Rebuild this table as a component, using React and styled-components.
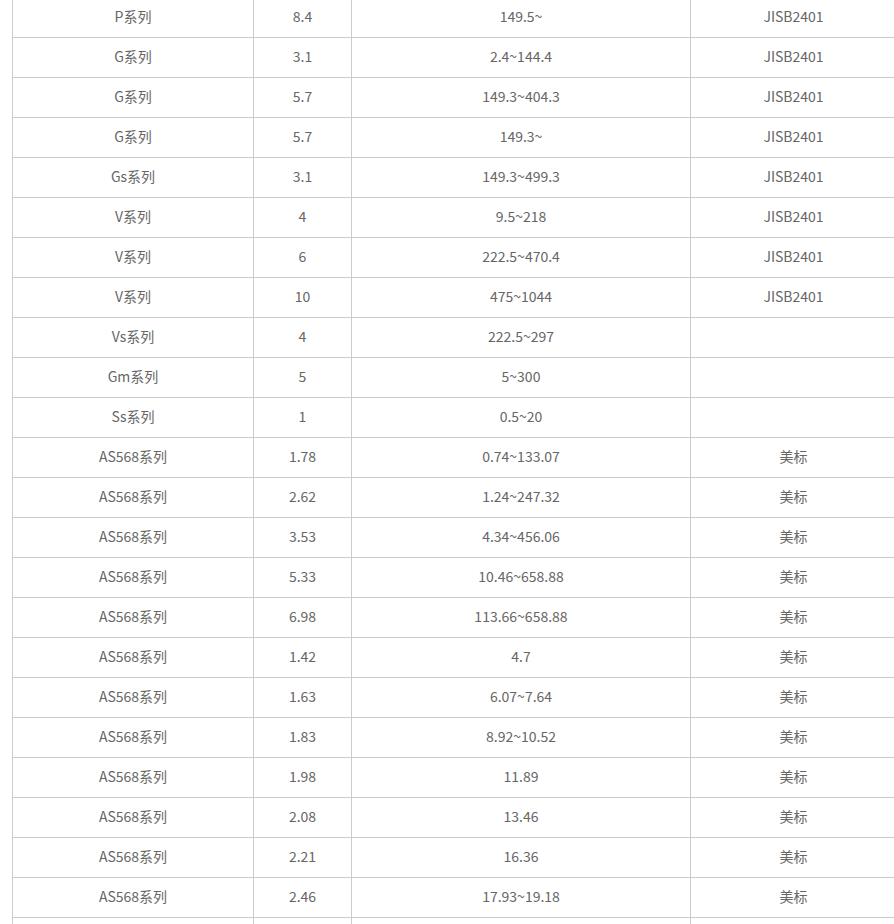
import React from 'react'
import styled, { createGlobalStyle } from 'styled-components'

const GlobalStyle = createGlobalStyle`
    html, body {
        margin: 0;
        padding: 0;
        background: #fff;
    }
`

const Wrap = styled.div`
    padding-left: 12px;
    margin-top: -3px;
    overflow: hidden;
    width: 894px;
`

const Table = styled.table`
    border-collapse: collapse;
    table-layout: fixed;
    width: 884px;
    font-family: 'Microsoft YaHei', 'Noto Sans CJK SC', 'Noto Sans', sans-serif;
    font-size: 14px;
    color: #666;
`

const Col = styled.col`
    width: ${p => p.$w}px;
`

const Row = styled.tr`
    height: 40px;
`

const Cell = styled.td`
    border: 1px solid #ccc;
    height: 35px;
    padding: 0 0 4px;
    text-align: center;
    vertical-align: middle;
    line-height: 20px;
`

const widths = [241, 98, 339, 206]

const rows = [
    ['P系列', '8.4', '149.5~', 'JISB2401'],
    ['G系列', '3.1', '2.4~144.4', 'JISB2401'],
    ['G系列', '5.7', '149.3~404.3', 'JISB2401'],
    ['G系列', '5.7', '149.3~', 'JISB2401'],
    ['Gs系列', '3.1', '149.3~499.3', 'JISB2401'],
    ['V系列', '4', '9.5~218', 'JISB2401'],
    ['V系列', '6', '222.5~470.4', 'JISB2401'],
    ['V系列', '10', '475~1044', 'JISB2401'],
    ['Vs系列', '4', '222.5~297', ''],
    ['Gm系列', '5', '5~300', ''],
    ['Ss系列', '1', '0.5~20', ''],
    ['AS568系列', '1.78', '0.74~133.07', '美标'],
    ['AS568系列', '2.62', '1.24~247.32', '美标'],
    ['AS568系列', '3.53', '4.34~456.06', '美标'],
    ['AS568系列', '5.33', '10.46~658.88', '美标'],
    ['AS568系列', '6.98', '113.66~658.88', '美标'],
    ['AS568系列', '1.42', '4.7', '美标'],
    ['AS568系列', '1.63', '6.07~7.64', '美标'],
    ['AS568系列', '1.83', '8.92~10.52', '美标'],
    ['AS568系列', '1.98', '11.89', '美标'],
    ['AS568系列', '2.08', '13.46', '美标'],
    ['AS568系列', '2.21', '16.36', '美标'],
    ['AS568系列', '2.46', '17.93~19.18', '美标'],
    ['AS568系列', '2.62', '20.29~22.10', '美标'],
]

const App = () => (
    <>
        <GlobalStyle />
        <Wrap>
            <Table>
                <colgroup>
                    {widths.map((w, i) => (
                        <Col key={i} $w={w} />
                    ))}
                </colgroup>
                <tbody>
                    {rows.map((r, i) => (
                        <Row key={i}>
                            {r.map((c, j) => (
                                <Cell key={j}>{c}</Cell>
                            ))}
                        </Row>
                    ))}
                </tbody>
            </Table>
        </Wrap>
    </>
)

export default App
